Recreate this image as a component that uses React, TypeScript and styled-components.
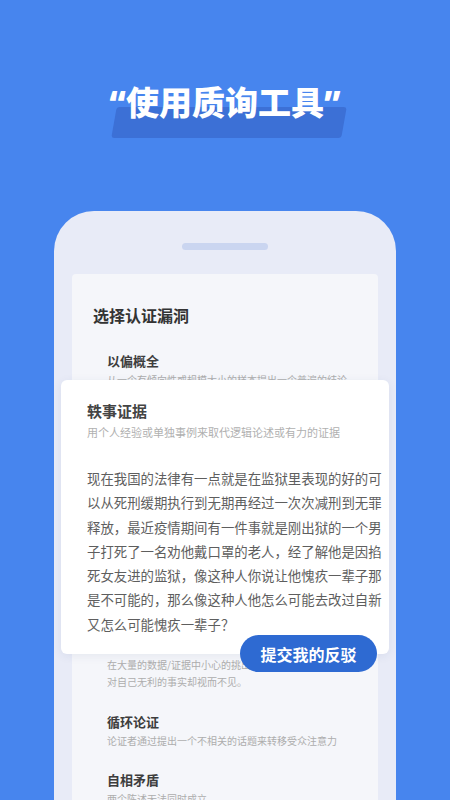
import React from 'react'
import styled, { createGlobalStyle } from 'styled-components'

const GlobalStyle = createGlobalStyle`
  html, body {
    background: #4785ee;
    margin: 0;
    padding: 0;
  }

  body {
    font-family: "Noto Sans CJK SC", "Noto Sans", sans-serif;
    overflow: hidden;
  }
`

const Page = styled.div`
  align-items: center;
  box-sizing: border-box;
  display: flex;
  flex-direction: column;
  height: 800px;
  overflow: hidden;
  padding-top: 80px;
  width: 450px;
`

const Headline = styled.h1`
  color: #fff;
  font-family: "Noto Sans", "Noto Sans CJK SC", sans-serif;
  font-size: 33px;
  font-weight: 900;
  line-height: 46px;
  margin: 0;
  position: relative;
  z-index: 0;

  &::before {
    background: #3c70d6;
    border-radius: 3px;
    content: '';
    height: 31px;
    left: 4px;
    position: absolute;
    right: -3px;
    top: 27px;
    transform: skewX(-10deg);
    z-index: -1;
  }
`

const Phone = styled.div`
  align-items: center;
  background: #e8ebf7;
  border-radius: 40px 40px 0 0;
  box-sizing: border-box;
  display: flex;
  flex: 1;
  flex-direction: column;
  margin-top: 85px;
  padding: 32px 18px 0;
  position: relative;
  width: 342px;
`

const Notch = styled.div`
  background: #cad5f0;
  border-radius: 4px;
  height: 7px;
  width: 86px;
`

const Screen = styled.div`
  align-self: stretch;
  background: #f5f6fa;
  border-radius: 4px 4px 0 0;
  box-sizing: border-box;
  flex: 1;
  margin-top: 24px;
  padding: 30px 28px 0 21px;
`

const ScreenTitle = styled.h2`
  color: #333;
  font-size: 16px;
  font-weight: 700;
  line-height: 22px;
  margin: 0;
`

const List = styled.div`
  display: flex;
  flex-direction: column;
  gap: 21.5px;
  margin-top: 25px;
  padding-left: 14px;
`

const Item = styled.div`
  display: flex;
  flex-direction: column;
`

const ItemTitle = styled.div`
  color: #3d3d3d;
  font-size: 13px;
  font-weight: 700;
  line-height: 20px;
`

const ItemDesc = styled.div`
  color: #adadad;
  font-size: 10px;
  line-height: 17px;
`

const Card = styled.div`
  background: #fff;
  border-radius: 6px;
  box-shadow: 0 2px 10px rgba(40, 60, 120, 0.08);
  box-sizing: border-box;
  height: 274px;
  left: 7px;
  padding: 20px 0 0 26px;
  position: absolute;
  top: 169px;
  width: 328px;
`

const CardTitle = styled.div`
  color: #444;
  font-size: 15px;
  font-weight: 700;
  line-height: 22px;
`

const CardDesc = styled.div`
  color: #b0b0b0;
  font-size: 11px;
  line-height: 16px;
  margin-top: 2px;
`

const Story = styled.p`
  color: #5e5e5e;
  font-size: 13.4px;
  line-height: 24.3px;
  margin: 26px 0 0;
  max-width: 22.1em;
`

const SubmitButton = styled.button`
  background: #2e6ad2;
  border: none;
  border-radius: 19px;
  color: #fff;
  font-family: "Noto Sans CJK SC", sans-serif;
  font-size: 16px;
  font-weight: 700;
  height: 37px;
  padding: 0;
  position: absolute;
  right: 12px;
  top: 255px;
  width: 137px;
`

const items = [
  { title: '以偏概全', desc: ['从一个有倾向性或规模大小的样本提出一个普遍的结论'] },
  { title: '诉诸权威', desc: ['用权威人士的观点代替论证本身，而不去检验', '这个观点是否真的有道理。'] },
  { title: '滑坡谬误', desc: ['把一个小的前提不断放大，推导出一连串', '并不必然发生的严重后果。'] },
  { title: '稻草人', desc: ['歪曲对方的观点，再去攻击这个被歪曲的', '版本，从而显得自己获胜。'] },
  { title: '选择性证据', desc: ['在大量的数据/证据中小心的挑出支持自己的', '对自己无利的事实却视而不见。'] },
  { title: '循环论证', desc: ['论证者通过提出一个不相关的话题来转移受众注意力'] },
  { title: '自相矛盾', desc: ['两个陈述无法同时成立'] },
]

const App = () => (
  <Page>
    <GlobalStyle />
    <Headline>“使用质询工具”</Headline>

    <Phone>
      <Notch />

      <Screen>
        <ScreenTitle>选择认证漏洞</ScreenTitle>

        <List>
          { items.map(({ title, desc }) => (
            <Item key={title}>
              <ItemTitle>{title}</ItemTitle>
              { desc.map(line => <ItemDesc key={line}>{line}</ItemDesc>) }
            </Item>
          )) }
        </List>
      </Screen>

      <Card>
        <CardTitle>轶事证据</CardTitle>
        <CardDesc>用个人经验或单独事例来取代逻辑论述或有力的证据</CardDesc>
        <Story>
          现在我国的法律有一点就是在监狱里表现的好的可以从死刑缓期执行到无期再经过一次次减刑到无罪释放，最近疫情期间有一件事就是刚出狱的一个男子打死了一名劝他戴口罩的老人，经了解他是因掐死女友进的监狱，像这种人你说让他愧疚一辈子那是不可能的，那么像这种人他怎么可能去改过自新又怎么可能愧疚一辈子？
        </Story>
        <SubmitButton>提交我的反驳</SubmitButton>
      </Card>
    </Phone>
  </Page>
)

export default App
